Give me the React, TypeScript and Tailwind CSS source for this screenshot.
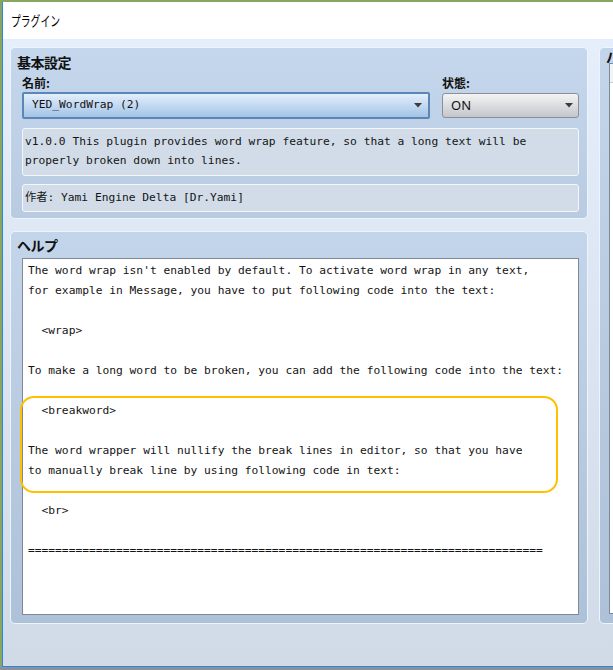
import React from 'react';

const mono = "font-['DejaVu_Sans_Mono','Noto_Sans_CJK_JP',monospace]";
const jp = "font-['Noto_Sans_CJK_JP','Noto_Sans',sans-serif]";

const helpLines = [
  "The word wrap isn't enabled by default. To activate word wrap in any text,",
  'for example in Message, you have to put following code into the text:',
  '',
  '  <wrap>',
  '',
  'To make a long word to be broken, you can add the following code into the text:',
  '',
  '  <breakword>',
  '',
  'The word wrapper will nullify the break lines in editor, so that you have',
  'to manually break line by using following code in text:',
  '',
  '  <br>',
  '',
  '='.repeat(76),
];

const Arrow: React.FC = () => (
  <svg width="8" height="5" viewBox="0 0 8 5" className="shrink-0">
    <path d="M0 0h8L4 4.5z" fill="#3c3c3c" />
  </svg>
);

const GroupTitle: React.FC<{ children: React.ReactNode; className?: string }> = ({ children, className = '' }) => (
  <div className={`${jp} font-bold text-[14px] text-[#111] tracking-[-0.5px] flex items-center whitespace-nowrap ${className}`}>
    {children}
  </div>
);

export default function App() {
  return (
    <div className="w-[613px] h-[670px] overflow-hidden bg-[#87a663] flex flex-col">
      <div className="ml-[2px] mt-[2px] h-[665px] w-[700px] border-l border-b border-[#2d87e0] bg-white flex flex-col">
        {/* title bar */}
        <div className="h-[37px] bg-white flex items-center pl-[8px]">
          <span className={`${jp} inline-block origin-left scale-x-[0.7] text-[14px] text-black`}>プラグイン</span>
        </div>

        {/* client */}
        <div className="flex-1 bg-gradient-to-b from-[#e4effb] to-[#d0dbe7] pt-[8px] pl-[7px] flex gap-[11px]">
          {/* left column */}
          <div className="w-[581px] flex flex-col gap-[12px]">
            {/* 基本設定 */}
            <div className="h-[172px] rounded-[5px] border border-[#eef4fb] bg-gradient-to-b from-[#c5d7ec] to-[#b8cbe1] pl-[11px] pr-[8px] flex flex-col">
              <GroupTitle className="h-[28px] -ml-[5px]">基本設定</GroupTitle>
              <div className="flex gap-[12px]">
                <div className="w-[408px] flex flex-col">
                  <div className={`${jp} font-bold text-[12px] text-[#111] h-[14px] flex items-center`}>名前:</div>
                  <div className="mt-[2px] h-[27px] rounded-[2px] border-2 border-[#5b86b6] bg-gradient-to-b from-[#e3effc] to-[#a3c3e6] flex items-center justify-between pl-[8px] pr-[6px]">
                    <span className={`${mono} text-[11.25px] text-[#111]`}>YED_WordWrap (2)</span>
                    <Arrow />
                  </div>
                </div>
                <div className="w-[137px] flex flex-col">
                  <div className={`${jp} font-bold text-[12px] text-[#111] h-[14px] flex items-center`}>状態:</div>
                  <div className="mt-[3px] h-[25px] rounded-[3px] border border-[#8c9096] bg-gradient-to-b from-[#f4f4f4] to-[#c3c6cb] flex items-center justify-between pl-[8px] pr-[5px]">
                    <span className="font-['Noto_Sans',sans-serif] text-[13px] text-[#111]">ON</span>
                    <Arrow />
                  </div>
                </div>
              </div>
              <div className="mt-[9px] h-[48px] rounded-[3px] border border-[#f3f7fb] bg-[#d1dce8] pl-[2px] pt-[3px]">
                <div className={`${mono} text-[11.25px] leading-[19px] text-[#141414] whitespace-pre`}>
                  {'v1.0.0 This plugin provides word wrap feature, so that a long text will be\nproperly broken down into lines.'}
                </div>
              </div>
              <div className="mt-[8px] h-[28px] rounded-[3px] border border-[#f3f7fb] bg-[#d1dce8] pl-[2px] flex items-center">
                <span className={`${mono} text-[11.25px] text-[#141414] whitespace-pre`}>作者: Yami Engine Delta [Dr.Yami]</span>
              </div>
            </div>

            {/* ヘルプ */}
            <div className="h-[393px] rounded-[5px] border border-[#eef4fb] bg-gradient-to-b from-[#c3d5ea] to-[#adc1d8] pl-[11px] pr-[8px] flex flex-col">
              <GroupTitle className="h-[26px] -ml-[5px]">ヘルプ</GroupTitle>
              <div className="relative h-[357px] border border-[#7f8893] bg-white pl-[5px] pt-[2px]">
                <div className={`${mono} text-[11.25px] leading-[20px] text-[#141414] whitespace-pre`}>
                  {helpLines.map((l, i) => (
                    <div key={i} className="h-[20px]">{l}</div>
                  ))}
                </div>
                <div className="absolute left-[-3px] top-[137px] w-[538px] h-[97px] rounded-[14px] border-2 border-[#ffc000]" />
              </div>
            </div>
          </div>

          {/* right column (cut off by the window edge) */}
          <div className="w-[200px] flex flex-col">
            <div className="h-[577px] rounded-[5px] border border-[#eef4fb] bg-gradient-to-b from-[#c3d5ea] to-[#adc1d8] pl-[9px] flex flex-col">
              <GroupTitle className="h-[15px] -ml-[3px] pt-[2px]">パラメータ</GroupTitle>
              <div className="h-[551px] border border-[#7f8893] bg-white flex flex-col">
                <div className="h-[19px] border-b border-[#c9cdd2] bg-[#f3f4f6]" />
              </div>
            </div>
          </div>
        </div>
      </div>
      <div className="flex-1 bg-[#8b9198]" />
    </div>
  );
}
